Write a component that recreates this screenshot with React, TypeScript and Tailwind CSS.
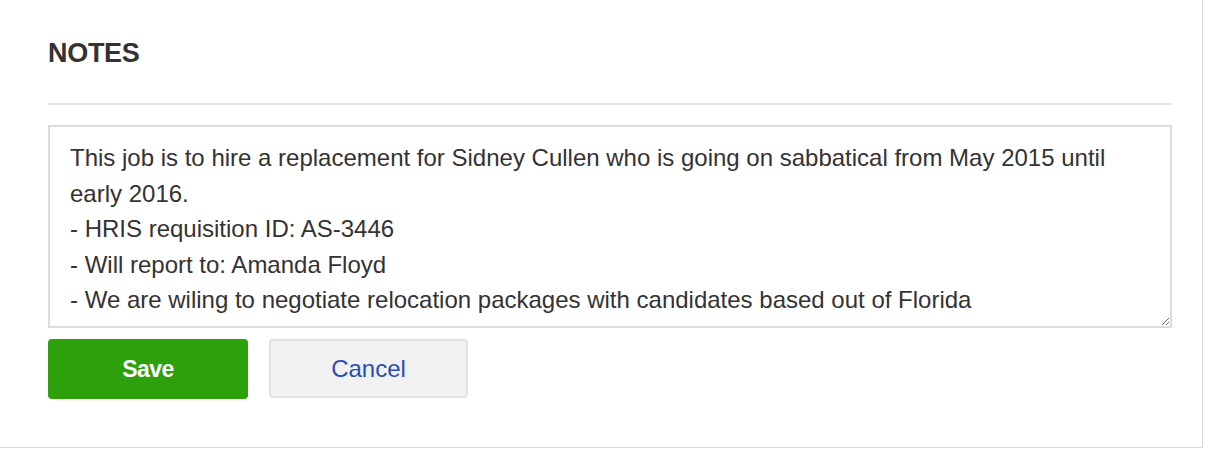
import { useState } from "react";

const INITIAL_NOTES = `This job is to hire a replacement for Sidney Cullen who is going on sabbatical from May 2015 until early 2016.
- HRIS requisition ID: AS-3446
- Will report to: Amanda Floyd
- We are wiling to negotiate relocation packages with candidates based out of Florida`;

export default function App() {
  const [notes, setNotes] = useState(INITIAL_NOTES);

  return (
    <div className="w-[1208px] h-[449px] bg-white font-['Liberation_Sans',Arial,sans-serif]">
      <div className="w-[1203px] h-[448px] bg-white border-r border-b border-[#d9d9d9] pl-[48px] pr-[30px] pt-[38px]">
        {/* Header */}
        <h2 className="text-[27px] font-bold text-[#333] leading-[30px] tracking-[-0.3px]">NOTES</h2>
        <div className="mt-[35px] h-[2px] bg-[#e3e3e3]" />

        {/* Notes field */}
        <textarea
          value={notes}
          onChange={(e) => setNotes(e.target.value)}
          className="mt-[20px] block w-full h-[203px] border-2 border-[#dcdcdc] bg-white pl-[20px] pr-[56px] pt-[13px] text-[24px] leading-[35.5px] text-[#333] outline-none resize-y"
        />

        {/* Actions */}
        <div className="mt-[11px] flex gap-[21px]">
          <button className="w-[200px] h-[60px] rounded-[4px] bg-[#2ca10c] text-white text-[23px] font-bold tracking-[-0.5px]">
            Save
          </button>
          <button className="w-[199px] h-[59px] rounded-[4px] bg-[#f1f1f1] border-2 border-[#e2e2e2] text-[#2c4eb2] text-[24px]">
            Cancel
          </button>
        </div>
      </div>
    </div>
  );
}
